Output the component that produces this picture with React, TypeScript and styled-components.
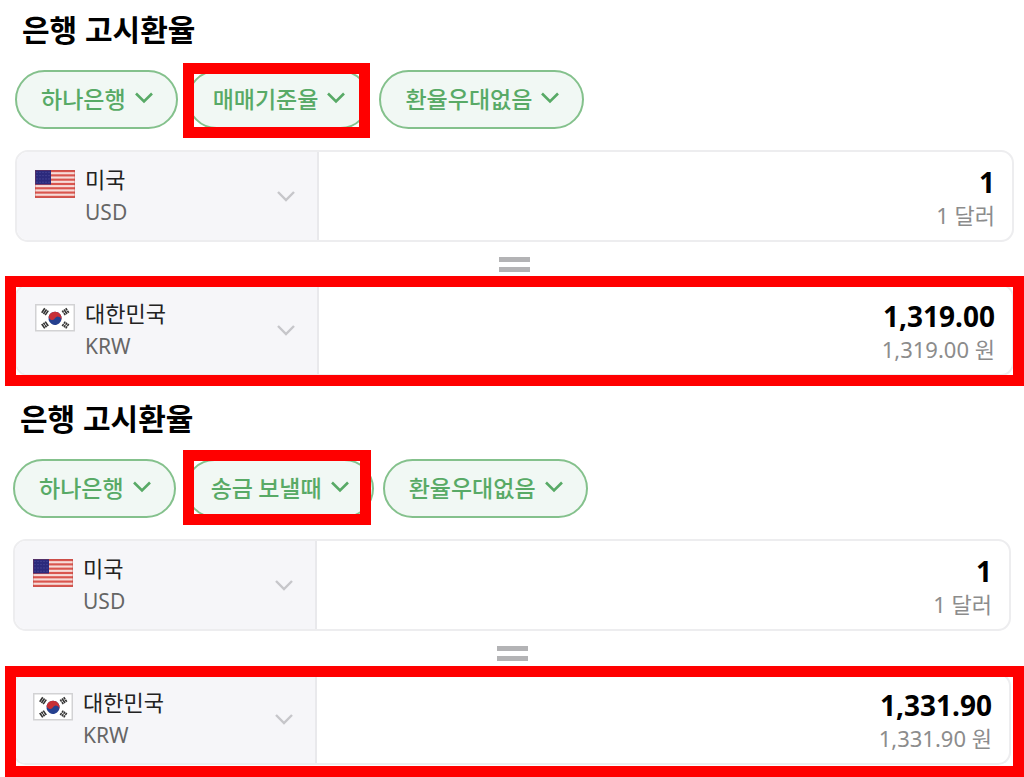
import React from "react";
import styled, { createGlobalStyle } from "styled-components";

const GlobalStyle = createGlobalStyle`
  *, *::before, *::after { box-sizing: border-box; }
  body {
    margin: 0;
    background: #fff;
    color: #000;
    font-family: "Noto Sans", "Noto Sans CJK KR", sans-serif;
  }
  button, input, select { font: inherit; color: inherit; }
`;

const Page = styled.main`
  overflow: hidden;
`;

const Panel = styled.section<{ $inset: string }>`
  padding: ${(p) => p.$inset};
`;

const Title = styled.h2`
  margin: 0;
  padding: 0 7px;
  font-size: 30px;
  line-height: 40px;
  font-weight: 700;
`;

const Filters = styled.div`
  display: flex;
  gap: 9px;
  margin-top: 20px;
`;

const Pill = styled.label`
  position: relative;
  display: flex;
`;

const PillSelect = styled.select`
  appearance: none;
  field-sizing: content;
  height: 59px;
  margin: 0;
  padding: 0 50px 4px 24px;
  border: 2px solid #84c18c;
  border-radius: 30px;
  background: #f1f8f4;
  color: #58aa66;
  font-family: "Noto Sans CJK KR", sans-serif;
  font-size: 23px;
  font-weight: 500;
  outline: none;
`;

const PillArrow = styled.svg`
  position: absolute;
  top: 21px;
  right: 24px;
  width: 20px;
  height: 13px;
  fill: none;
  stroke: #58aa66;
  stroke-width: 2.6;
  pointer-events: none;
`;

const Highlight = styled.span<{ $inset: string }>`
  position: absolute;
  inset: ${(p) => p.$inset};
  border: 11px solid #f00;
  pointer-events: none;
`;

const Row = styled.div`
  position: relative;
`;

const Card = styled.div`
  display: flex;
  height: 92px;
  border: 2px solid #ededef;
  border-radius: 13px;
  overflow: hidden;
  background: #fff;
`;

const Country = styled.button`
  display: flex;
  align-items: flex-start;
  flex: 0 0 302px;
  padding: 11px 21px 0 18px;
  border: 0;
  border-right: 2px solid #e9e9ec;
  background: #f6f6f9;
  text-align: left;
`;

const FlagArt = styled.svg`
  flex: none;
  width: 40px;
  height: 28px;
  margin: 7px 10px 0 0;
`;

const Names = styled.span`
  display: flex;
  flex-direction: column;
  flex: 1;
  line-height: 33px;
`;

const CountryName = styled.span`
  font-size: 22px;
  color: #222;
`;

const Code = styled.span`
  font-size: 21px;
  color: #666;
`;

const CountryArrow = styled.svg`
  flex: none;
  width: 20px;
  height: 13px;
  margin-top: 27px;
  fill: none;
  stroke: #c6c6ca;
  stroke-width: 2.4;
`;

const Amount = styled.label`
  display: flex;
  flex-direction: column;
  flex: 1;
  min-width: 0;
  padding: 14px 17px 0;
  text-align: right;
  line-height: 33px;
`;

const AmountInput = styled.input`
  width: 100%;
  height: 33px;
  padding: 0;
  border: 0;
  outline: none;
  background: transparent;
  text-align: right;
  font-size: 28px;
  font-weight: 700;
`;

const Unit = styled.span`
  font-size: 22px;
  color: #8c8c8c;
`;

const Equals = styled.div`
  display: flex;
  justify-content: center;
  height: 42px;
  padding-top: 15px;
  svg {
    width: 31px;
    height: 15px;
    fill: #b3b3b5;
  }
`;

const Rates = styled.div`
  margin-top: 21px;
`;

const UsFlag = () => (
  <FlagArt viewBox="0 0 40 28" aria-hidden="true">
    <rect width="40" height="28" fill="#f6dcd9" />
    {[0, 1, 2, 3, 4, 5, 6].map((i) => (
      <rect key={i} y={i * 4.3} width="40" height="2.15" fill="#d9554e" />
    ))}
    <rect width="16" height="14.5" fill="#2c2a7c" />
    {[0, 1, 2, 3].map((r) =>
      [0, 1, 2, 3, 4].map((c) => (
        <circle key={`${r}-${c}`} cx={2 + c * 3} cy={2.3 + r * 3.3} r="0.6" fill="#5553a0" />
      ))
    )}
    <rect x="0.5" y="0.5" width="39" height="27" fill="none" stroke="#b0403c" strokeOpacity="0.3" />
  </FlagArt>
);

const trigrams = [
  { x: 10, y: 7.7, turn: -56, split: [false, false, false] },
  { x: 30.5, y: 7.7, turn: 56, split: [true, false, true] },
  { x: 10, y: 21, turn: 56, split: [false, true, false] },
  { x: 30.5, y: 21, turn: -56, split: [true, true, true] },
];

const KrFlag = () => (
  <FlagArt viewBox="0 0 40 28" aria-hidden="true">
    <rect x="0.75" y="0.75" width="38.5" height="26" fill="#fff" stroke="#d2d2d4" strokeWidth="1.5" />
    <g transform="rotate(30 20 14.3)">
      <circle cx="20" cy="14.3" r="6.6" fill="#25408f" />
      <path d="M13.4 14.3a6.6 6.6 0 0 1 13.2 0a3.3 3.3 0 0 0-6.6 0a3.3 3.3 0 0 1-6.6 0z" fill="#c62f36" />
    </g>
    {trigrams.map((t, n) => (
      <g key={n} transform={`translate(${t.x} ${t.y}) rotate(${t.turn})`} stroke="#333" strokeWidth="1.6">
        {t.split.map((s, i) => (
          <path key={i} d={s ? `M-2.7 ${(i - 1) * 2.1}h2.4m0.6 0h2.4` : `M-2.7 ${(i - 1) * 2.1}h5.4`} />
        ))}
      </g>
    ))}
  </FlagArt>
);

type FilterProps = { name: string; value: string; highlight?: string };

const Filter = ({ name, value, highlight }: FilterProps) => (
  <Pill>
    <PillSelect name={name} aria-label={value}>
      <option>{value}</option>
    </PillSelect>
    <PillArrow viewBox="0 0 20 13" aria-hidden="true">
      <path d="M2 2.5l8 8 8-8" />
    </PillArrow>
    {highlight && <Highlight $inset={highlight} />}
  </Pill>
);

type CurrencyProps = {
  flag: React.ReactNode;
  country: string;
  code: string;
  amount: string;
  unit: string;
  highlight?: string;
};

const Currency = ({ flag, country, code, amount, unit, highlight }: CurrencyProps) => (
  <Row>
    <Card>
      <Country type="button" aria-haspopup="listbox">
        {flag}
        <Names>
          <CountryName>{country}</CountryName>
          <Code>{code}</Code>
        </Names>
        <CountryArrow viewBox="0 0 20 13" aria-hidden="true">
          <path d="M2 2l8 8 8-8" />
        </CountryArrow>
      </Country>
      <Amount>
        <AmountInput type="text" inputMode="decimal" defaultValue={amount} />
        <Unit>{amount} {unit}</Unit>
      </Amount>
    </Card>
    {highlight && <Highlight $inset={highlight} />}
  </Row>
);

type ExchangeProps = {
  inset: string;
  basis: string;
  basisHighlight: string;
  won: string;
  wonHighlight: string;
};

const Exchange = ({ inset, basis, basisHighlight, won, wonHighlight }: ExchangeProps) => (
  <Panel $inset={inset}>
    <Title>은행 고시환율</Title>
    <Filters>
      <Filter name="bank" value="하나은행" />
      <Filter name="basis" value={basis} highlight={basisHighlight} />
      <Filter name="discount" value="환율우대없음" />
    </Filters>
    <Rates>
      <Currency flag={<UsFlag />} country="미국" code="USD" amount="1" unit="달러" />
      <Equals>
        <svg viewBox="0 0 31 15" aria-hidden="true">
          <rect width="31" height="5" />
          <rect y="10" width="31" height="5" />
        </svg>
      </Equals>
      <Currency
        flag={<KrFlag />}
        country="대한민국"
        code="KRW"
        amount={won}
        unit="원"
        highlight={wonHighlight}
      />
    </Rates>
  </Panel>
);

export default function App() {
  return (
    <Page>
      <GlobalStyle />
      <Exchange
        inset="10px 10px 13px 15px"
        basis="매매기준율"
        basisHighlight="-7px 0 -9px -4px"
        won="1,319.00"
        wonHighlight="-8px -10px -10px -10px"
      />
      <Exchange
        inset="10px 13px 12px 13px"
        basis="송금 보낼때"
        basisHighlight="-9px 3px -7px -2px"
        won="1,331.90"
        wonHighlight="-7px -13px -12px -8px"
      />
    </Page>
  );
}
